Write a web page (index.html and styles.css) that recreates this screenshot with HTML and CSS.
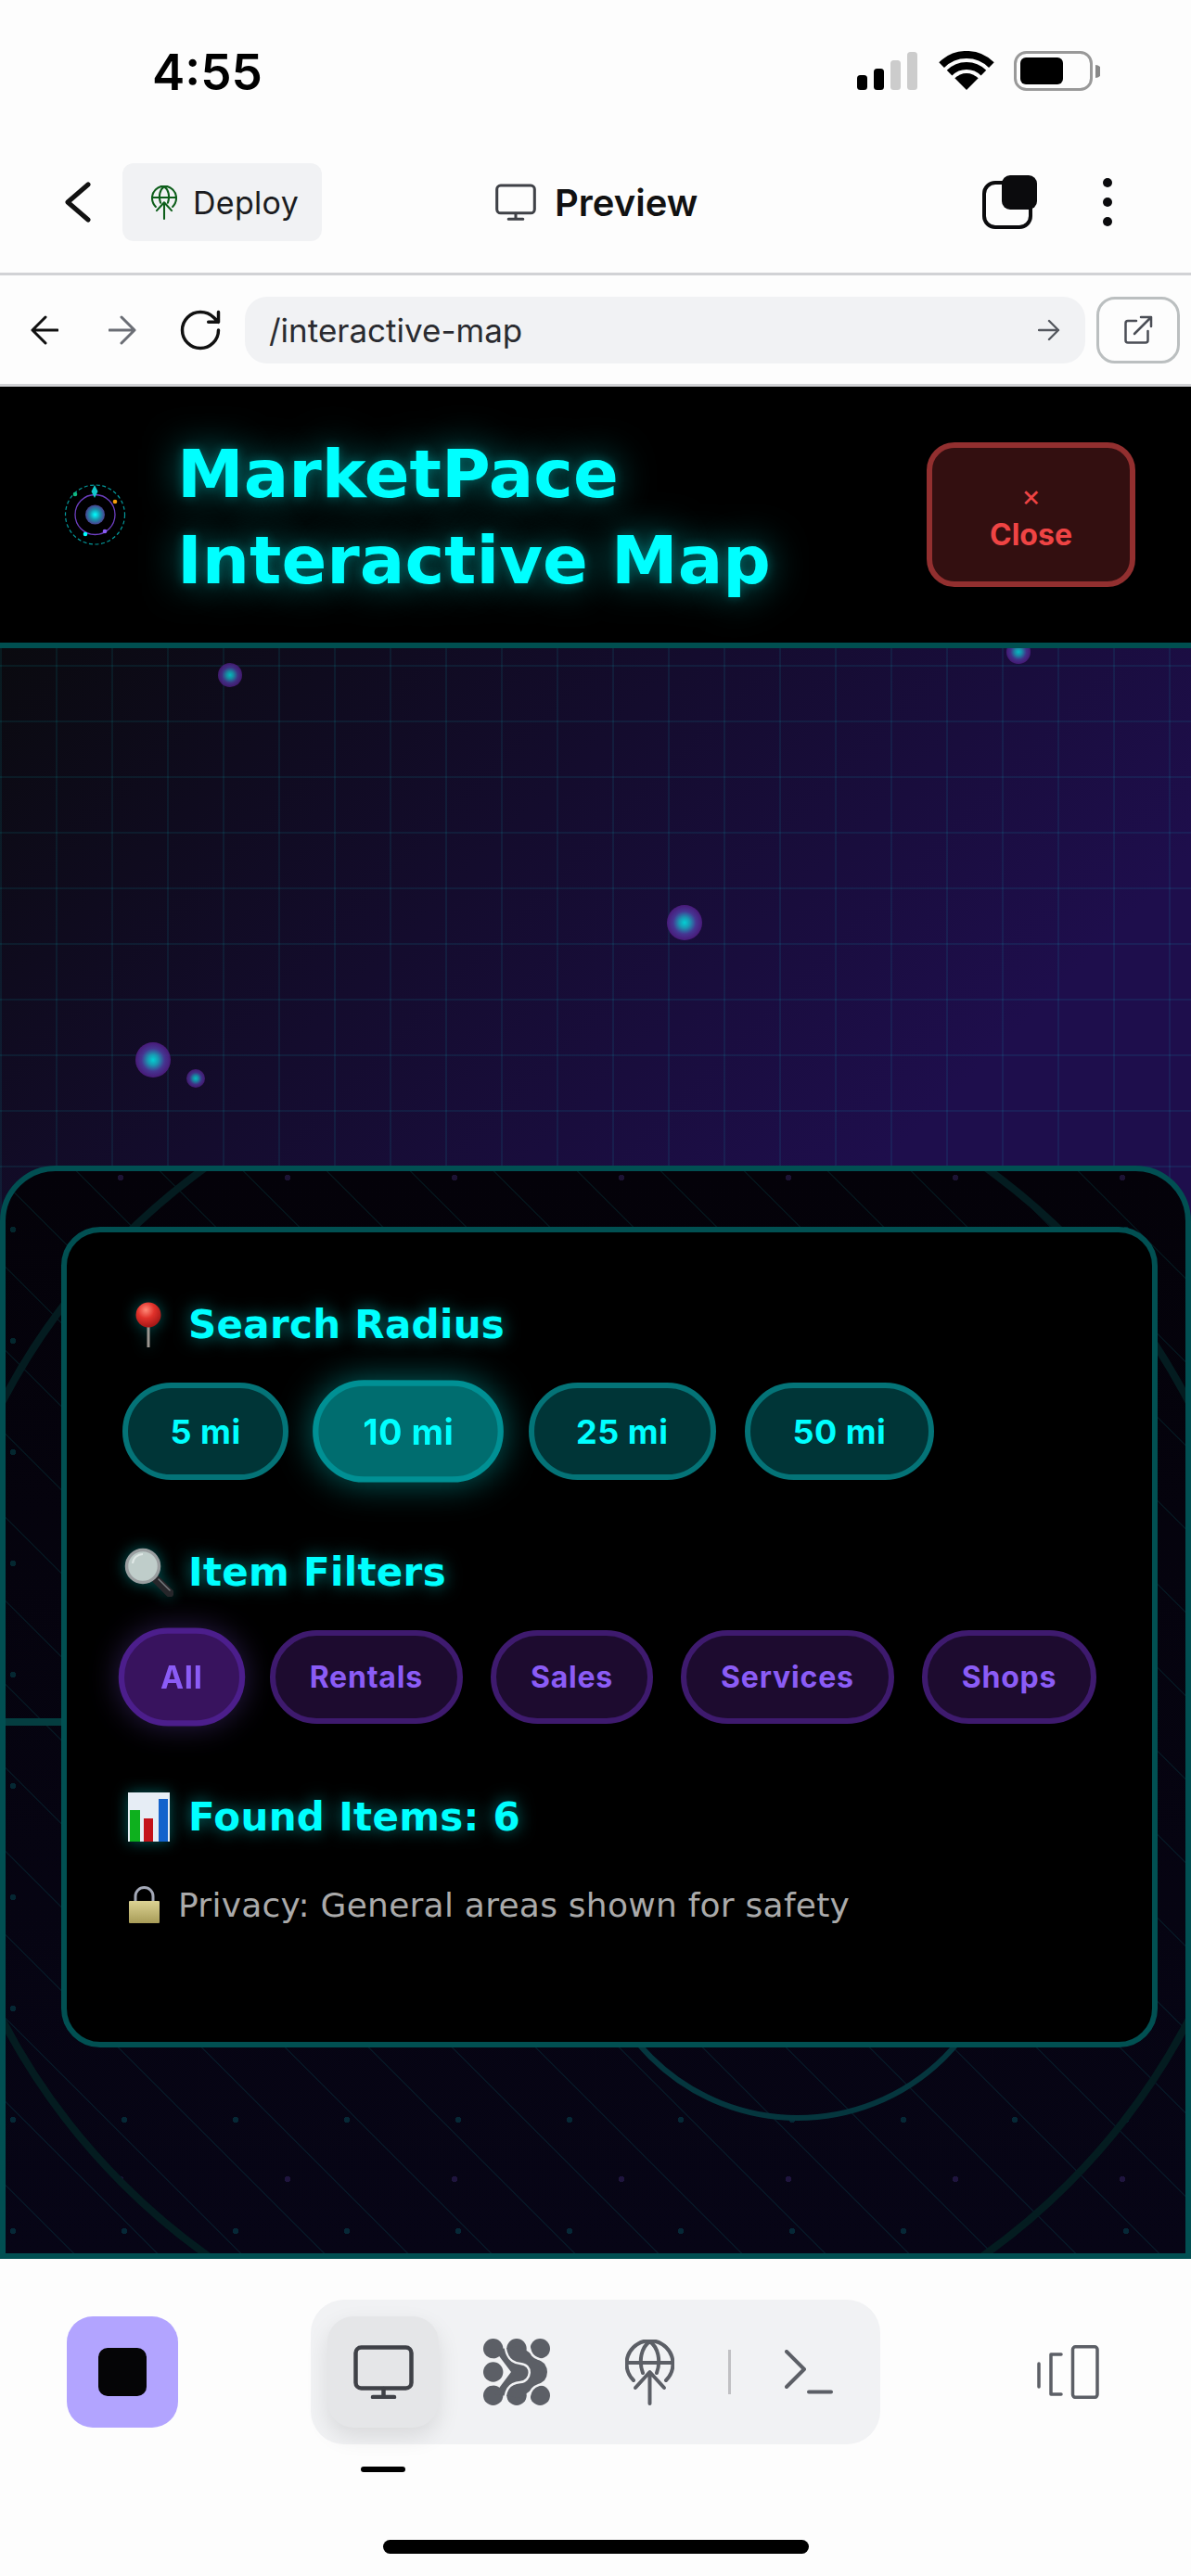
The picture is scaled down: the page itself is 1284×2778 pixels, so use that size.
FILE: index.html
```html
<!DOCTYPE html>
<html>
<head>
<meta charset="utf-8">
<title>MarketPace Interactive Map</title>
<link rel="stylesheet" href="styles.css">
</head>
<body>

<svg class="defs" width="0" height="0">
	<symbol id="globe-up" viewBox="0 0 53 71">
		<g fill="none" stroke="currentColor" stroke-width="4" stroke-linecap="round" stroke-linejoin="round">
			<path d="M9 44A25 25 0 1 1 44 44"/>
			<path d="M2 25H51"/>
			<path d="M19 36C14 22 18 8 26.5 2C35 8 39 22 34 36"/>
			<path d="M26.5 69V37M11 52L26.5 35L42 52"/>
		</g>
	</symbol>
	<symbol id="monitor" viewBox="0 0 65 58">
		<g fill="none" stroke="currentColor" stroke-width="4.5" stroke-linecap="round" stroke-linejoin="round">
			<rect x="2.5" y="2.5" width="60" height="44" rx="6"/>
			<path d="M32.5 47V56M21 56H44"/>
		</g>
	</symbol>
</svg>

<div class="status">
	<span class="time">4:55</span>
	<div class="status-icons">
		<svg class="signal" width="65" height="41" viewBox="0 0 65 41">
			<rect x="0" y="25" width="11" height="16" rx="3.5" fill="#000"/>
			<rect x="18" y="18" width="11" height="23" rx="3.5" fill="#000"/>
			<rect x="36" y="9" width="11" height="32" rx="3.5" fill="#ccc"/>
			<rect x="54" y="0" width="11" height="41" rx="3.5" fill="#ccc"/>
		</svg>
		<svg class="wifi" width="60" height="42" viewBox="0 0 60 42">
			<path d="M3.1 15.1A38 38 0 0 1 56.9 15.1" fill="none" stroke="#000" stroke-width="8"/>
			<path d="M11.6 23.6A26 26 0 0 1 48.4 23.6" fill="none" stroke="#000" stroke-width="8"/>
			<path d="M30 42L17.3 29.3A18 18 0 0 1 42.7 29.3Z" fill="#000"/>
		</svg>
		<svg class="battery" width="93" height="43" viewBox="0 0 93 43">
			<rect x="1.5" y="1.5" width="82" height="40" rx="12" fill="none" stroke="#999" stroke-width="3"/>
			<rect x="7" y="7" width="46" height="29" rx="6" fill="#000"/>
			<path d="M88 15A7 7 0 0 1 88 29Z" fill="#888"/>
		</svg>
	</div>
</div>

<div class="topbar">
	<svg class="back" width="28" height="46" viewBox="0 0 28 46">
		<path d="M25 4L3 23L25 42" fill="none" stroke="#111" stroke-width="5" stroke-linecap="round" stroke-linejoin="round"/>
	</svg>
	<button class="deploy">
		<svg class="deploy-icon" width="28" height="37"><use href="#globe-up"/></svg>
		<span>Deploy</span>
	</button>
	<div class="preview">
		<svg class="preview-icon" width="44" height="40"><use href="#monitor"/></svg>
		<span>Preview</span>
	</div>
	<div class="topbar-right">
		<svg width="59" height="58" viewBox="0 0 59 58">
			<rect x="2" y="8" width="50" height="48" rx="12" fill="none" stroke="#0b0b0d" stroke-width="4"/>
			<rect x="21" y="0" width="38" height="37" rx="9" fill="#0b0b0d"/>
		</svg>
		<div class="dots"><i></i><i></i><i></i></div>
	</div>
</div>

<div class="urlbar">
	<svg class="nav-arrow" width="30" height="32" viewBox="0 0 30 32">
		<path d="M29 16H2M16 2L2 16L16 30" fill="none" stroke="#111" stroke-width="3" stroke-linecap="round" stroke-linejoin="round"/>
	</svg>
	<svg class="nav-arrow nav-forward" width="30" height="32" viewBox="0 0 30 32">
		<path d="M1 16H28M14 2L28 16L14 30" fill="none" stroke="#6b6e75" stroke-width="3" stroke-linecap="round" stroke-linejoin="round"/>
	</svg>
	<svg class="reload" width="52" height="52" viewBox="0 0 24 24">
		<path d="M21 12a9 9 0 1 1-9-9c2.52 0 4.93 1 6.74 2.74L21 8M21 3v5h-5" fill="none" stroke="#111" stroke-width="1.6" stroke-linecap="round" stroke-linejoin="round"/>
	</svg>
	<div class="url-field">
		<span>/interactive-map</span>
		<svg width="24" height="24" viewBox="0 0 24 24">
			<path d="M1 12H22M12 2L22 12L12 22" fill="none" stroke="#55585f" stroke-width="2.4" stroke-linecap="round" stroke-linejoin="round"/>
		</svg>
	</div>
	<button class="open-btn">
		<svg width="32" height="32" viewBox="0 0 32 32">
			<path d="M14 6H5a2.500 2.500 0 0 0-2.500 2.500V27a2.500 2.500 0 0 0 2.500 2.500H24a2.500 2.500 0 0 0 2.500-2.500V17" fill="none" stroke="#4b4e56" stroke-width="2.5" stroke-linecap="round"/>
			<path d="M12 20L30 2M19 2H30V12" fill="none" stroke="#4b4e56" stroke-width="2.5" stroke-linecap="round" stroke-linejoin="round"/>
		</svg>
	</button>
</div>

<header class="app-header">
	<svg class="logo" width="80" height="80" viewBox="0 0 80 80">
		<defs>
			<radialGradient id="core">
				<stop offset="0" stop-color="#0ff"/>
				<stop offset="0.55" stop-color="#1c8fa8"/>
				<stop offset="1" stop-color="#4a3f8f"/>
			</radialGradient>
		</defs>
		<circle cx="39.5" cy="40" r="32" fill="none" stroke="#049a9c" stroke-width="1.2" stroke-dasharray="4 2.6"/>
		<circle cx="39.5" cy="40" r="21.5" fill="none" stroke="#6d3fc0" stroke-width="1.3"/>
		<circle cx="39.5" cy="40" r="10.5" fill="url(#core)"/>
		<path d="M39 8L42.5 15L39 22L35.5 15Z" fill="#12c9cc"/>
		<circle cx="18" cy="18" r="2.3" fill="#10b981"/>
		<circle cx="61" cy="26" r="2.3" fill="#f59e0b"/>
		<circle cx="29" cy="61" r="2.3" fill="#0ff"/>
		<circle cx="50" cy="58" r="2.3" fill="#8b5cf6"/>
	</svg>
	<h1 class="app-title">MarketPace<br>Interactive Map</h1>
	<button class="close-btn">
		<span class="close-x">×</span>
		<span>Close</span>
	</button>
</header>

<main class="map">
	<i class="pin pin-a"></i>
	<i class="pin pin-b"></i>
	<i class="pin pin-c"></i>
	<i class="pin pin-d"></i>
	<i class="pin pin-e"></i>

	<section class="panel">
		<i class="ring ring-big"></i>
		<i class="ring ring-small"></i>
		<i class="panel-line"></i>

		<div class="card">
			<h2 class="heading first">
				<span class="emoji">
					<svg width="30" height="49" viewBox="0 0 30 49">
						<defs>
							<radialGradient id="ball" cx="0.4" cy="0.3" r="0.75">
								<stop offset="0" stop-color="#ff8a78"/>
								<stop offset="0.45" stop-color="#e0312a"/>
								<stop offset="1" stop-color="#9c1414"/>
							</radialGradient>
						</defs>
						<rect x="13.5" y="22" width="3" height="27" fill="#9b9690"/>
						<circle cx="15" cy="14" r="13.5" fill="url(#ball)"/>
					</svg>
				</span>
				Search Radius
			</h2>
			<div class="pills radius">
				<button class="pill">5 mi</button>
				<button class="pill active">10 mi</button>
				<button class="pill">25 mi</button>
				<button class="pill">50 mi</button>
			</div>

			<h2 class="heading">
				<span class="emoji">
					<svg width="53" height="53" viewBox="0 0 53 53">
						<path d="M34 34L49 49" stroke="#26262a" stroke-width="9" stroke-linecap="round"/>
						<path d="M37 34L49 46" stroke="#77797d" stroke-width="1.5" stroke-linecap="round"/>
						<circle cx="20" cy="20" r="17.5" fill="#bfcdca" stroke="#9a9ea0" stroke-width="3.5"/>
						<path d="M9 17A11 11 0 0 1 20 7" fill="none" stroke="#dfe8e6" stroke-width="2"/>
					</svg>
				</span>
				Item Filters
			</h2>
			<div class="pills filters">
				<button class="pill active">All</button>
				<button class="pill">Rentals</button>
				<button class="pill">Sales</button>
				<button class="pill">Services</button>
				<button class="pill">Shops</button>
			</div>

			<h2 class="heading found">
				<span class="emoji">
					<svg width="45" height="53" viewBox="0 0 45 53">
						<rect width="45" height="53" fill="#e6edf5"/>
						<rect x="2" y="19" width="11" height="34" fill="#0eb01e"/>
						<rect x="17" y="28" width="10" height="25" fill="#c4121a"/>
						<rect x="33" y="7" width="10" height="46" fill="#1463cc"/>
					</svg>
				</span>
				Found Items: 6
			</h2>

			<p class="privacy">
				<span class="lock">
					<svg width="33" height="40" viewBox="0 0 33 40">
						<defs>
							<linearGradient id="brass" x1="0" y1="0" x2="0" y2="1">
								<stop offset="0" stop-color="#dcd394"/>
								<stop offset="1" stop-color="#a89c58"/>
							</linearGradient>
						</defs>
						<path d="M7 18V11A9.5 9.5 0 0 1 26 11V18" fill="none" stroke="#a4a9b8" stroke-width="3"/>
						<rect y="16" width="33" height="24" rx="1" fill="url(#brass)"/>
					</svg>
				</span>
				Privacy: General areas shown for safety
			</p>
		</div>
	</section>
</main>

<footer class="dock">
	<div class="dock-row">
		<button class="stop-btn"><i></i></button>
		<div class="segment-wrap">
			<div class="segment">
				<div class="tab-active">
					<svg width="65" height="58"><use href="#monitor"/></svg>
				</div>
				<svg class="seg-net" width="72" height="72" viewBox="0 0 72 72">
					<g fill="#5c5f66">
						<circle cx="10.7" cy="10.7" r="10.7"/>
						<circle cx="36" cy="10.7" r="10.7"/>
						<circle cx="61.3" cy="10.7" r="10.7"/>
						<circle cx="10.7" cy="36" r="10.7"/>
						<circle cx="10.7" cy="61.3" r="10.7"/>
						<circle cx="36" cy="61.3" r="10.7"/>
						<circle cx="61.3" cy="61.3" r="10.7"/>
						<path d="M12 12L40 8L66 27Q72 36 66 45L40 64L12 60L30 36Z"/>
					</g>
					<g fill="none" stroke="#f1f2f4" stroke-width="2.5">
						<path d="M23 0C23 14 26 26 40 27C54 28 52 46 40 47C27 48 23 56 23 72"/>
						<path d="M0 22C14 22 25 26 25 36C25 46 14 50 0 50"/>
						<path d="M49 0C49 16 52 23 72 24"/>
						<path d="M72 48C52 49 49 56 49 72"/>
					</g>
				</svg>
				<svg class="seg-globe" width="53" height="71"><use href="#globe-up"/></svg>
				<i class="seg-divider"></i>
				<svg class="seg-term" width="52" height="48" viewBox="0 0 52 48">
					<path d="M2 2L21 21L2 40M26 45.5H50" fill="none" stroke="#5c5f66" stroke-width="4" stroke-linecap="round" stroke-linejoin="round"/>
				</svg>
			</div>
			<i class="indicator"></i>
		</div>
		<svg class="device-icon" width="67" height="58" viewBox="0 0 67 58">
			<g fill="none" stroke="#5c5f66" stroke-width="3.5" stroke-linecap="round" stroke-linejoin="round">
				<rect x="38.5" y="1.8" width="26.5" height="54.5" rx="3"/>
				<path d="M26 10H15V53H26"/>
				<path d="M2 20V45"/>
			</g>
		</svg>
	</div>
	<i class="home-bar"></i>
</footer>

</body>
</html>
```

FILE: styles.css
```css
* {
	box-sizing: border-box;
}

html, body {
	margin: 0;
	height: 2778px;
}

body {
	display: flex;
	flex-direction: column;
	width: 1284px;
	overflow: hidden;
	background: #fdfdfd;
	font-family: Inter, "Liberation Sans", sans-serif;
	color: #111;
}

button {
	border: 0;
	margin: 0;
	padding: 0;
	font: inherit;
	background: none;
}

svg {
	display: block;
	flex: none;
}

i {
	display: block;
}

.defs {
	position: absolute;
}

/* phone status bar */
.status {
	display: flex;
	align-items: center;
	justify-content: space-between;
	height: 150px;
	padding: 2px 98px 0 164px;
}

.time {
	padding-top: 3px;
	font-size: 53px;
	font-weight: 600;
	color: #000;
}

.status-icons {
	display: flex;
	align-items: center;
	gap: 23px;
}

.wifi {
	margin-right: -2px;
}

/* top bar */
.topbar {
	display: flex;
	align-items: center;
	height: 144px;
	padding: 0 85px 8px 70px;
}

.back {
	margin-right: 34px;
}

.deploy {
	display: flex;
	align-items: center;
	gap: 17px;
	width: 215px;
	height: 84px;
	padding-left: 31px;
	border-radius: 12px;
	background: #f1f2f4;
	font-size: 34px;
	letter-spacing: .3px;
	color: #1b1c20;
}

.deploy-icon {
	color: #0d5e1a;
}

.preview {
	display: flex;
	align-items: center;
	gap: 20px;
	margin-left: 187px;
	font-size: 40px;
	font-weight: 600;
}

.preview-icon {
	color: #3f4147;
}

.topbar-right {
	display: flex;
	align-items: center;
	gap: 71px;
	margin-left: auto;
}

.dots {
	display: flex;
	flex-direction: column;
	gap: 11px;
}

.dots i {
	width: 10px;
	height: 10px;
	border-radius: 50%;
	background: #0b0b0d;
}

/* url bar */
.urlbar {
	display: flex;
	align-items: center;
	height: 123px;
	padding: 0 12px 0 33px;
	border-top: 3px solid #d1d2d5;
	border-bottom: 3px solid #d1d2d5;
}

.nav-forward {
	margin-left: 54px;
}

.reload {
	margin: 0 22px 0 43px;
}

.url-field {
	display: flex;
	align-items: center;
	justify-content: space-between;
	width: 906px;
	height: 72px;
	padding: 0 27px 0 26px;
	border-radius: 24px;
	background: #f1f2f4;
	font-size: 35px;
	color: #2a2b30;
}

.open-btn {
	display: flex;
	align-items: center;
	justify-content: center;
	width: 90px;
	height: 72px;
	margin-left: 12px;
	border: 3px solid #bbbfc0;
	border-radius: 20px;
}

/* app header */
.app-header {
	display: flex;
	align-items: center;
	height: 282px;
	padding: 0 60px 0 63px;
	border-bottom: 6px solid #004f50;
	background: #000;
}

.app-title {
	margin: 6px 0 0 48px;
	font-family: "DejaVu Sans", sans-serif;
	font-size: 72px;
	font-weight: 700;
	line-height: 93px;
	color: #0ff;
	text-shadow: 0 0 12px rgba(0,255,255,.25), 0 0 40px rgba(0,255,255,.5);
}

.close-btn {
	display: flex;
	flex-direction: column;
	align-items: center;
	justify-content: center;
	width: 225px;
	height: 156px;
	margin-left: auto;
	padding-top: 7px;
	border: 6px solid #922f2f;
	border-radius: 30px;
	background: #330f10;
	font-size: 32px;
	font-weight: 700;
	line-height: 40px;
	color: #ef4444;
}

.close-x {
	margin-bottom: 7px;
	font-weight: 400;
	line-height: 30px;
}

/* map */
.map {
	position: relative;
	flex: 1;
	overflow: hidden;
	background:
		linear-gradient(rgba(0,255,255,.07) 2px, transparent 2px) 0 18px / 60px 60px,
		linear-gradient(90deg, rgba(0,255,255,.07) 2px, transparent 2px) 0 0 / 60px 60px,
		linear-gradient(135deg, #0a0a0f, #1e0e4c 50%);
}

.pin {
	position: absolute;
	border-radius: 50%;
	background: radial-gradient(circle closest-side, #00e5e5, #1ba7c0 30%, #4b3a9c 65%, #4e1b80 100%);
	opacity: .9;
}

.pin-a { left: 235px; top: 16px; width: 26px; height: 26px; opacity: .8; }
.pin-b { left: 1085px; top: -9px; width: 26px; height: 26px; opacity: .8; }
.pin-c { left: 719px; top: 277px; width: 38px; height: 38px; }
.pin-d { left: 146px; top: 425px; width: 38px; height: 38px; }
.pin-e { left: 201px; top: 454px; width: 20px; height: 20px; opacity: .8; }

/* panel over the map */
.panel {
	position: absolute;
	left: 0;
	right: 0;
	bottom: 0;
	height: 1179px;
	padding: 60px 30px 0 60px;
	overflow: hidden;
	border: 6px solid #014f52;
	border-radius: 60px 60px 0 0;
	background:
		radial-gradient(circle 3px at 8px 63px, rgba(0,255,255,.14) 99%, transparent) 0 0 / 120px 120px,
		radial-gradient(circle 3px at 124px 7px, rgba(139,92,246,.18) 99%, transparent) 0 0 / 180px 180px,
		repeating-linear-gradient(45deg, transparent 0, transparent 51px, rgba(0,255,255,.07) 51px, rgba(0,255,255,.07) 53px, transparent 53px, transparent 63.64px),
		linear-gradient(#040209, #070516);
}

.ring {
	position: absolute;
	border-radius: 50%;
	border-style: solid;
}

.ring-big {
	left: -89px;
	top: -143px;
	width: 1450px;
	height: 1450px;
	border-width: 8px;
	border-color: #041c20;
}

.ring-small {
	left: 627px;
	top: 570px;
	width: 454px;
	height: 454px;
	border-width: 6px;
	border-color: #05363e;
}

.panel-line {
	position: absolute;
	left: 0;
	top: 590px;
	width: 62px;
	height: 8px;
	background: #043d40;
}

.card {
	position: relative;
	width: 1182px;
	height: 885px;
	padding: 71px 60px 0;
	border: 6px solid #015052;
	border-radius: 42px;
	background: #000;
}

.heading {
	display: flex;
	align-items: center;
	height: 56px;
	margin: 71px 0 35px;
	padding-top: 2px;
	font-family: "DejaVu Sans", sans-serif;
	font-size: 42px;
	font-weight: 700;
	line-height: 54px;
	letter-spacing: .3px;
	color: #0ff;
	text-shadow: 0 0 18px rgba(0,255,255,.5);
}

.heading.first {
	margin-top: 0;
}

.heading.found {
	margin-top: 72px;
	margin-bottom: 0;
}

.emoji {
	display: flex;
	align-items: center;
	justify-content: center;
	width: 56px;
	margin: -2px 15px 0 0;
	filter: drop-shadow(0 0 8px rgba(0,255,255,.35));
}

.pills {
	display: flex;
}

.pill {
	border-style: solid;
	border-width: 6px;
	border-radius: 60px;
	font-weight: 700;
}

.radius {
	gap: 31px;
}

.radius .pill {
	height: 105px;
	padding: 0 45.5px;
	border-color: #047377;
	background: #003537;
	font-size: 36px;
	letter-spacing: .5px;
	color: #0ff;
}

.radius .pill.active {
	transform: scale(1.05);
	border-color: #009094;
	background: #006d6f;
	box-shadow: 0 0 36px rgba(0,255,255,.4);
}

.filters {
	gap: 30px;
	margin-left: -1px;
}

.filters .pill {
	height: 101px;
	padding: 0 37px;
	border-color: #3e1a6e;
	background: #1d0b2f;
	font-size: 32px;
	font-weight: 700;
	letter-spacing: .8px;
	color: #8b5cf6;
}

.filters .pill.active {
	transform: scale(1.05);
	border-color: #4c1e8c;
	background: #38135e;
	box-shadow: 0 0 30px rgba(139,92,246,.3);
}

.privacy {
	display: flex;
	align-items: center;
	height: 44px;
	margin: 45px 0 0;
	font-family: "DejaVu Sans", sans-serif;
	font-size: 36px;
	letter-spacing: .25px;
	color: #aaa;
}

.lock {
	width: 47px;
	margin-right: 13px;
	padding-left: 7px;
}

/* bottom dock */
.dock {
	height: 342px;
	padding-top: 44px;
	background: #fdfdfd;
}

.dock-row {
	display: flex;
	align-items: flex-start;
	padding-left: 72px;
}

.stop-btn {
	display: flex;
	align-items: center;
	justify-content: center;
	width: 120px;
	height: 120px;
	margin-top: 18px;
	border-radius: 28px;
	background: #b2a4ff;
}

.stop-btn i {
	width: 52px;
	height: 52px;
	border-radius: 10px;
	background: #050506;
}

.segment-wrap {
	margin-left: 143px;
}

.segment {
	display: flex;
	align-items: center;
	width: 614px;
	height: 156px;
	padding-left: 18px;
	border-radius: 36px;
	background: #f1f2f4;
	color: #5c5f66;
}

.tab-active {
	display: flex;
	align-items: center;
	justify-content: center;
	width: 120px;
	height: 120px;
	border-radius: 28px;
	background: #e5e6e8;
	box-shadow: 0 10px 24px rgba(0,0,0,.1);
	color: #3f4147;
}

.seg-net {
	margin-left: 48px;
}

.seg-globe {
	margin-left: 81px;
}

.seg-divider {
	width: 3px;
	height: 48px;
	margin: 0 58px;
	background: #c0c0c3;
}

.indicator {
	width: 48px;
	height: 6px;
	margin: 24px 0 0 54px;
	border-radius: 3px;
	background: #000;
}

.device-icon {
	margin: 49px 0 0 169px;
}

.home-bar {
	width: 459px;
	height: 15px;
	margin: 73px 0 0 413px;
	border-radius: 8px;
	background: #000;
}
```
